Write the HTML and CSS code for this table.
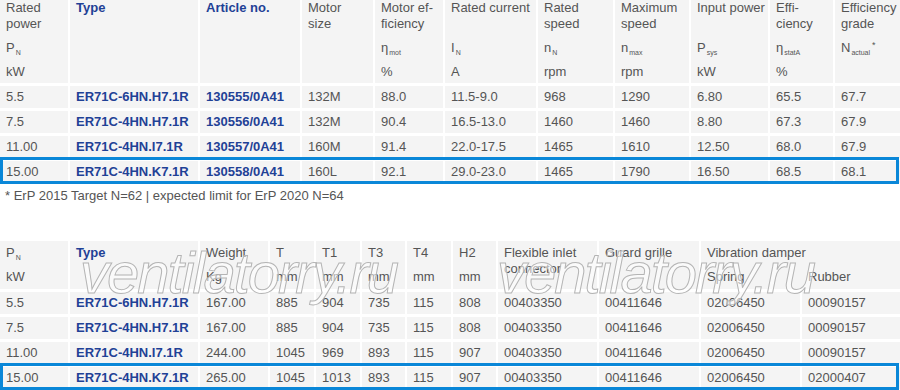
FILE: index.html
```html
<!DOCTYPE html>
<html>
<head>
<meta charset="utf-8">
<link rel="stylesheet" href="styles.css">
</head>
<body>
<section class="table t1">
  <div class="row head">
    <div class="hc"><div class="name">Rated<br>power</div><div class="sym">P<sub>N</sub></div><div class="unit">kW</div></div>
    <div class="hc"><div class="name blue">Type</div></div>
    <div class="hc"><div class="name blue">Article no.</div></div>
    <div class="hc"><div class="name">Motor<br>size</div></div>
    <div class="hc"><div class="name">Motor ef-<br>ficiency</div><div class="sym">η<sub>mot</sub></div><div class="unit">%</div></div>
    <div class="hc"><div class="name">Rated current</div><div class="sym">I<sub>N</sub></div><div class="unit">A</div></div>
    <div class="hc"><div class="name">Rated<br>speed</div><div class="sym">n<sub>N</sub></div><div class="unit">rpm</div></div>
    <div class="hc"><div class="name">Maximum<br>speed</div><div class="sym">n<sub>max</sub></div><div class="unit">rpm</div></div>
    <div class="hc"><div class="name">Input power</div><div class="sym">P<sub>sys</sub></div><div class="unit">kW</div></div>
    <div class="hc"><div class="name">Effi-<br>ciency</div><div class="sym">η<sub>statA</sub></div><div class="unit">%</div></div>
    <div class="hc"><div class="name">Efficiency<br>grade</div><div class="sym">N<sub>actual</sub><sup>*</sup></div><div class="unit"></div></div>
  </div>
  <div class="row">
    <div>5.5</div><div class="b">ER71C-6HN.H7.1R</div><div class="b">130555/0A41</div><div>132M</div><div>88.0</div><div>11.5-9.0</div><div>968</div><div>1290</div><div>6.80</div><div>65.5</div><div>67.7</div>
  </div>
  <div class="row">
    <div>7.5</div><div class="b">ER71C-4HN.H7.1R</div><div class="b">130556/0A41</div><div>132M</div><div>90.4</div><div>16.5-13.0</div><div>1460</div><div>1460</div><div>8.80</div><div>67.3</div><div>67.9</div>
  </div>
  <div class="row">
    <div>11.00</div><div class="b">ER71C-4HN.I7.1R</div><div class="b">130557/0A41</div><div>160M</div><div>91.4</div><div>22.0-17.5</div><div>1465</div><div>1610</div><div>12.50</div><div>68.0</div><div>67.9</div>
  </div>
  <div class="row hl">
    <div>15.00</div><div class="b">ER71C-4HN.K7.1R</div><div class="b">130558/0A41</div><div>160L</div><div>92.1</div><div>29.0-23.0</div><div>1465</div><div>1790</div><div>16.50</div><div>68.5</div><div>68.1</div>
  </div>
</section>
<p class="note">* ErP 2015 Target N=62 | expected limit for ErP 2020 N=64</p>

<section class="table t2">
  <div class="row head">
    <div class="hc"><div class="name">P<sub>N</sub></div><div class="unit">kW</div></div>
    <div class="hc"><div class="name blue">Type</div></div>
    <div class="hc"><div class="name">Weight</div><div class="unit">Kg</div></div>
    <div class="hc"><div class="name">T</div><div class="unit">mm</div></div>
    <div class="hc"><div class="name">T1</div><div class="unit">mm</div></div>
    <div class="hc"><div class="name">T3</div><div class="unit">mm</div></div>
    <div class="hc"><div class="name">T4</div><div class="unit">mm</div></div>
    <div class="hc"><div class="name">H2</div><div class="unit">mm</div></div>
    <div class="hc"><div class="name">Flexible inlet<br>connector</div></div>
    <div class="hc"><div class="name">Guard grille</div></div>
    <div class="hc span2"><div class="name">Vibration damper</div><div class="subunits"><div>Spring</div><div>Rubber</div></div></div>
  </div>
  <div class="row">
    <div>5.5</div><div class="b">ER71C-6HN.H7.1R</div><div>167.00</div><div>885</div><div>904</div><div>735</div><div>115</div><div>808</div><div>00403350</div><div>00411646</div><div>02006450</div><div>00090157</div>
  </div>
  <div class="row">
    <div>7.5</div><div class="b">ER71C-4HN.H7.1R</div><div>167.00</div><div>885</div><div>904</div><div>735</div><div>115</div><div>808</div><div>00403350</div><div>00411646</div><div>02006450</div><div>00090157</div>
  </div>
  <div class="row">
    <div>11.00</div><div class="b">ER71C-4HN.I7.1R</div><div>244.00</div><div>1045</div><div>969</div><div>893</div><div>115</div><div>907</div><div>00403350</div><div>00411646</div><div>02006450</div><div>00090157</div>
  </div>
  <div class="row hl">
    <div>15.00</div><div class="b">ER71C-4HN.K7.1R</div><div>265.00</div><div>1045</div><div>1013</div><div>893</div><div>115</div><div>907</div><div>00403350</div><div>00411646</div><div>02006450</div><div>02000407</div>
  </div>
  <span class="wm wm1">ventilatorry.ru</span>
  <span class="wm wm2">ventilatorry.ru</span>
</section>
</body>
</html>
```

FILE: styles.css
```css
html, body {
  margin: 0;
  padding: 0;
  background: #ffffff;
  overflow: hidden;
}
body {
  width: 900px;
  height: 390px;
  font-family: "Liberation Sans", Arial, sans-serif;
  font-size: 13px;
  color: #555555;
}
.table {
  display: flex;
  flex-direction: column;
  row-gap: 3px;
  width: 900px;
  position: relative;
}
.row {
  display: grid;
  column-gap: 2px;
  position: relative;
}
.t1 .row {
  grid-template-columns: 68px 128px 100px 71px 68px 91px 75px 74px 77px 63px 65px;
}
.t2 .row {
  grid-template-columns: 68px 128px 68px 44px 44px 43px 44px 43px 99px 100px 99px 98px;
}
.row > div {
  background: #f4f4f4;
  height: 22px;
  line-height: 22px;
  padding-left: 6px;
  white-space: nowrap;
}
.row > div.b {
  color: #1f4196;
  font-weight: bold;
}
.row.hl::after {
  content: "";
  position: absolute;
  left: 0;
  right: 1px;
  top: -4px;
  bottom: -1px;
  border: 3px solid #0a87d8;
  pointer-events: none;
}
.t1 .head > .hc {
  height: 83px;
  line-height: 16px;
}
.hc .blue {
  color: #1f4196;
  font-weight: bold;
}
.t1 .name {
  height: 36px;
  line-height: 16px;
}
.t1 .sym, .t1 .unit {
  height: 24px;
  line-height: 24px;
}
sub {
  font-size: 7px;
  vertical-align: -3px;
  line-height: 0;
  margin-left: 1px;
}
sup {
  font-size: 9px;
  vertical-align: 4px;
  line-height: 0;
  margin-left: 2px;
}
.t2 .head > .hc {
  height: 48px;
  line-height: 16px;
}
.t2 .name {
  height: 20px;
  padding-top: 4px;
  line-height: 16px;
}
.t2 .unit {
  height: 24px;
  line-height: 24px;
}
.t2 .head > .span2 {
  grid-column: span 2;
  padding-left: 0;
}
.span2 .name {
  padding-left: 6px;
}
.subunits {
  display: grid;
  grid-template-columns: 99px 98px;
  column-gap: 2px;
  height: 24px;
  line-height: 24px;
}
.subunits > div {
  padding-left: 6px;
}
.note {
  margin: 5px 0 0 0;
  height: 16px;
  line-height: 16px;
  padding-left: 5px;
  color: #555555;
}
.t2 {
  margin-top: 37px;
}
.wm {
  position: absolute;
  top: 3px;
  font-family: "Liberation Sans", Arial, sans-serif;
  font-style: italic;
  font-size: 58px;
  line-height: 58px;
  letter-spacing: -2px;
  color: rgba(255, 255, 255, 0.55);
  -webkit-text-stroke: 1px #b4b4b4;
  white-space: nowrap;
  pointer-events: none;
}
.wm1 {
  left: 80px;
}
.wm2 {
  left: 497px;
}
```
